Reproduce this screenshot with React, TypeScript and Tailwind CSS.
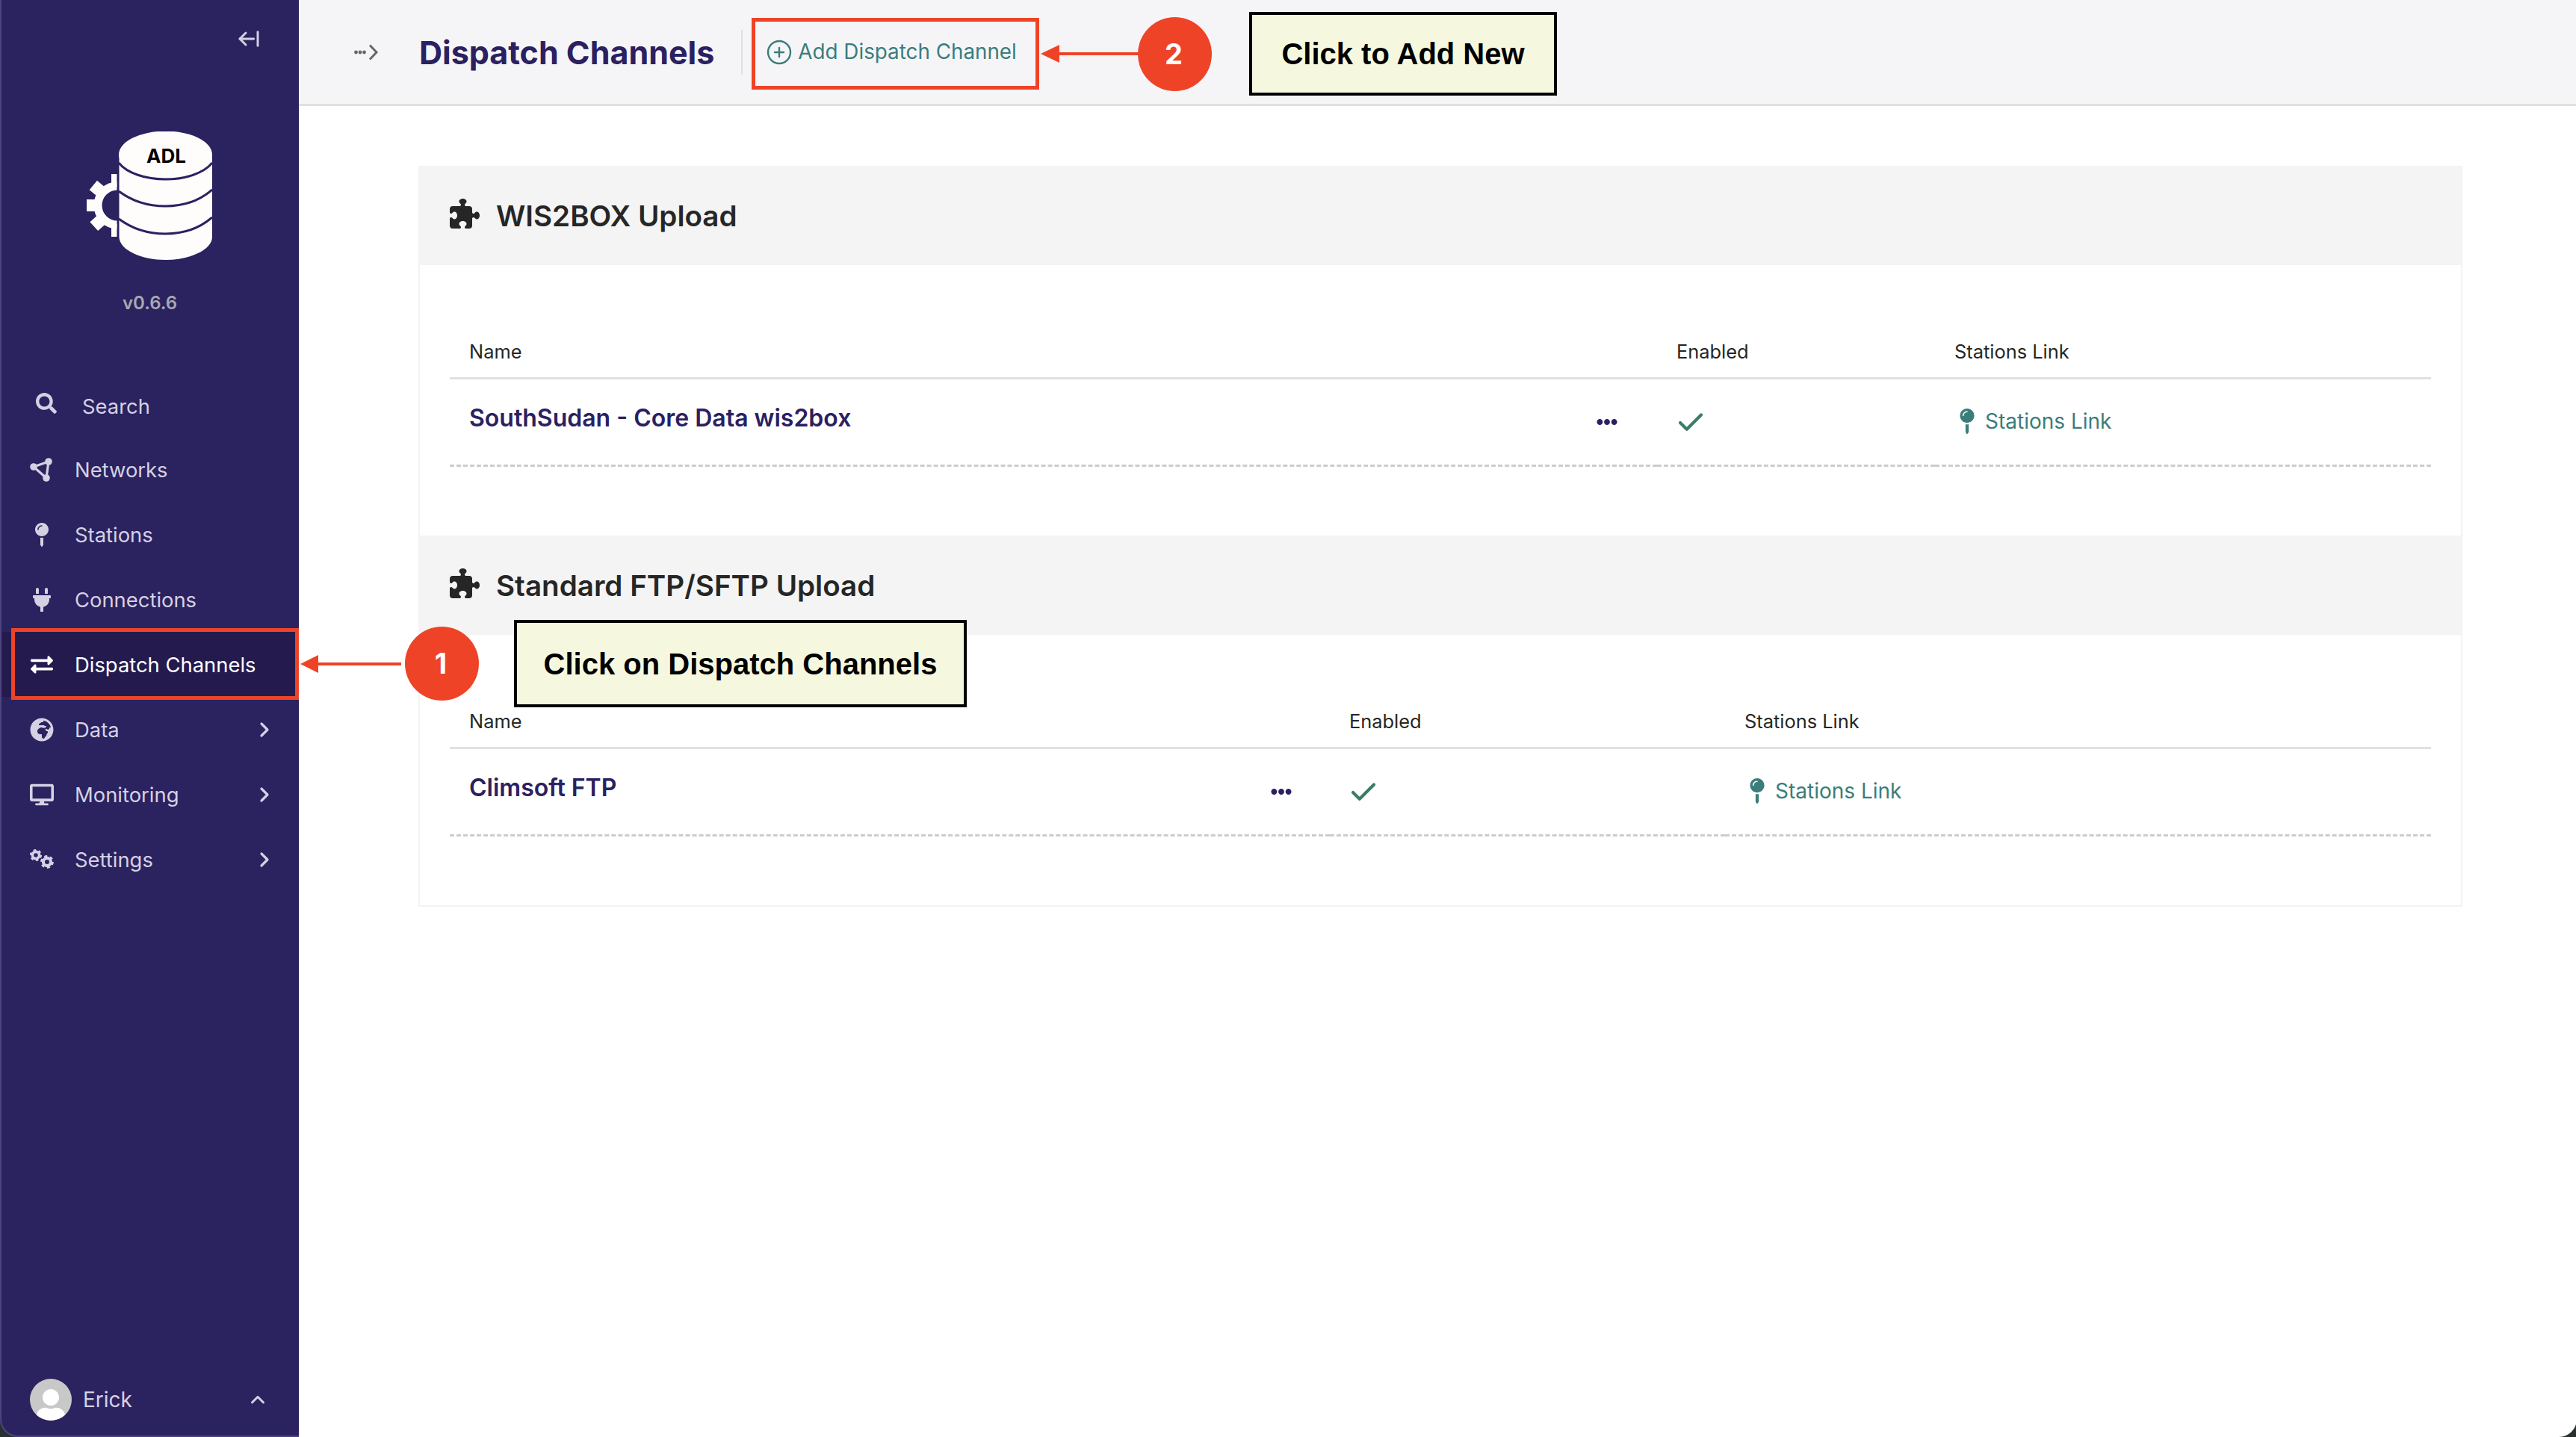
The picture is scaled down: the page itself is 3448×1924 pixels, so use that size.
import React from "react";
import { FaSearch, FaMapPin, FaPlug, FaExchangeAlt, FaGlobeAfrica, FaDesktop, FaEllipsisH, FaUser } from "react-icons/fa";
import { FaPuzzlePiece } from "react-icons/fa6";
import { ArrowLeftFromLine, Check, ChevronRight, ChevronUp, CirclePlus } from "lucide-react";

function NetworkIcon() {
  return (
    <svg viewBox="0 0 32 32" className="w-[32px] h-[32px]" fill="none">
      <path d="M5 12L25 5L22 27Z" stroke="#d5d1e3" strokeWidth="3.2" strokeLinejoin="round" />
      <circle cx="5" cy="12" r="4.8" fill="#d5d1e3" />
      <circle cx="25" cy="5" r="4.8" fill="#d5d1e3" />
      <circle cx="22" cy="27" r="4.8" fill="#d5d1e3" />
    </svg>
  );
}

function SettingsIcon() {
  const gear = (cx: number, cy: number, r: number) => (
    <g key={cx} fill="none" stroke="currentColor">
      <circle cx={cx} cy={cy} r={r * 0.62} strokeWidth={r * 0.5} />
      <circle cx={cx} cy={cy} r={r * 0.92} strokeWidth={r * 0.34} strokeDasharray={`${r * 0.48} ${r * 0.483}`} />
    </g>
  );
  return (
    <svg viewBox="0 0 32 32" className="w-[32px] h-[32px] text-[#d5d1e3]">
      {gear(8, 10, 7.4)}
      {gear(23, 19, 8.2)}
    </svg>
  );
}

function Logo() {
  const teeth = [90, 140, 180, 222, 270];
  return (
    <svg viewBox="116 176 168 172" className="w-[168px] h-[172px] ml-[116px]">
      <defs>
        <clipPath id="gearclip"><rect x="110" y="230" width="46.5" height="90" /></clipPath>
      </defs>
      <g clipPath="url(#gearclip)" fill="#fffcfc">
        <circle cx="157" cy="275" r="26" fill="none" stroke="#fffcfc" strokeWidth="11" />
        {teeth.map((a) => (
          <rect key={a} x="182" y="267" width="17" height="16" transform={`rotate(${-a} 157 275)`} />
        ))}
      </g>
      <path d="M159.5 207 V317 C159.5 335 190 348 221.5 348 C253 348 284 335 284 317 V207 Z" fill="#fffcfc" />
      <ellipse cx="221.5" cy="207" rx="62.5" ry="31.5" fill="#fffcfc" />
      <path d="M159 218 C170 232 195 240 221.5 240 C248 240 273 232 284 218" stroke="#2b2260" strokeWidth="3" fill="none" />
      <path d="M159 256 C175 268 195 276 221.5 276 C248 276 268 268 284 254" stroke="#2b2260" strokeWidth="3" fill="none" />
      <path d="M159 293 C175 305 195 313 221.5 313 C248 313 268 305 284 291" stroke="#2b2260" strokeWidth="3" fill="none" />
    </svg>
  );
}

const nav = [
  { label: "Networks", icon: <NetworkIcon /> },
  { label: "Stations", icon: <FaMapPin size={32} /> },
  { label: "Connections", icon: <FaPlug size={32} /> },
  { label: "Dispatch Channels", icon: <FaExchangeAlt size={30} />, active: true },
  { label: "Data", icon: <FaGlobeAfrica size={32} />, more: true },
  { label: "Monitoring", icon: <FaDesktop size={32} />, more: true },
  { label: "Settings", icon: <SettingsIcon />, more: true },
];

function Sidebar() {
  return (
    <aside className="w-[400px] shrink-0 bg-[#2b2260] border-l-2 border-b-2 border-[#4f4380] rounded-bl-[24px] flex flex-col text-[#d5d1e3]">
      <div className="flex justify-end h-[176px] pt-[36px] pr-[51px]">
        <ArrowLeftFromLine size={32} strokeWidth={2.2} className="text-[#d5d1e3]" />
      </div>
      <div className="relative -ml-[2px]">
        <Logo />
        <span className="absolute left-[196px] top-[18px] text-[26px] font-bold leading-[30px] text-black">ADL</span>
      </div>
      <div className="text-center text-[24px] font-semibold leading-[30px] text-[#a9a8ad] mt-[43px] -ml-[1px]">v0.6.6</div>
      <div className="flex items-center h-[87px] mt-[79px] pl-[46px] gap-[34px]">
        <FaSearch size={28} className="-mt-[8px]" />
        <span className="text-[27.4px] leading-[36px]">Search</span>
      </div>
      <nav className="flex flex-col -mt-[2px]">
        {nav.map((n) => (
          <div key={n.label} className={`flex items-center h-[87px] pl-[26px] pr-[30px] ${n.active ? "bg-[#241a4e] text-white" : ""}`}>
            <span className="w-[60px] flex justify-center shrink-0 -ml-[2px] mr-[14px]">{n.icon}</span>
            <span className="text-[27.4px] leading-[36px] flex-1">{n.label}</span>
            {n.more && <ChevronRight size={32} strokeWidth={2.4} />}
          </div>
        ))}
      </nav>
      <div className="mt-auto flex items-center h-[56px] mb-[20px] pl-[38px] pr-[40px]">
        <div className="w-[56px] h-[56px] rounded-full bg-[#c8c8c8] overflow-hidden flex items-end justify-center">
          <FaUser size={44} className="text-white -mb-[2px]" />
        </div>
        <span className="ml-[15px] text-[28px] flex-1">Erick</span>
        <ChevronUp size={30} strokeWidth={2.4} />
      </div>
    </aside>
  );
}

function Section({ title, name, cols, dotsPr }: { title: string; name: string; cols: [string, string, string]; dotsPr: string }) {
  return (
    <section>
      <div className="h-[133px] bg-[#f4f4f4] flex items-center pl-[40px] gap-[22px] text-[#262626]">
        <FaPuzzlePiece size={40} className="-mt-[6px]" />
        <h2 className="text-[38.6px] font-semibold leading-[50px]">{title}</h2>
      </div>
      <div className="px-[40px] pb-[92px]">
        <table className="w-full table-fixed">
          <colgroup>
            <col className={cols[0]} />
            <col className={cols[1]} />
            <col className={cols[2]} />
          </colgroup>
          <thead>
            <tr className="border-b-[3px] border-[#e0e0e0] text-left text-[25.4px] text-[#262626]">
              <th className="font-normal pl-[26px] pt-[101px] pb-[19px] leading-[30px]">Name</th>
              <th className="font-normal pl-[26px] pt-[101px] pb-[19px] leading-[30px]">Enabled</th>
              <th className="font-normal pl-[26px] pt-[101px] pb-[19px] leading-[30px]">Stations Link</th>
            </tr>
          </thead>
          <tbody>
            <tr className="h-[117px] border-b-[3px] border-dashed border-[#cccccc]">
              <td className={`pl-[26px] ${dotsPr}`}>
                <div className="flex items-center justify-between">
                  <span className="text-[32px] font-semibold text-[#2b2060] leading-[40px] -mt-[10px]">{name}</span>
                  <FaEllipsisH size={28} className="text-[#2b2060]" />
                </div>
              </td>
              <td className="pl-[26px]">
                <Check size={42} strokeWidth={2.4} className="text-[#3a7d66] -ml-[2px] mt-[2px]" />
              </td>
              <td className="pl-[26px]">
                <div className="flex items-center text-[#3a7d7b] text-[28px]">
                  <FaMapPin className="ml-[7px] w-[20px] h-[34px] -mt-[2px]" />
                  <span className="ml-[14px] -mt-[2px]">Stations Link</span>
                </div>
              </td>
            </tr>
          </tbody>
        </table>
      </div>
    </section>
  );
}

function Callout({ className, children }: { className: string; children: React.ReactNode }) {
  return (
    <div className={`absolute border-[4px] border-black bg-[#f5f8de] text-black flex items-center justify-center text-[40px] font-bold ${className}`} style={{ fontFamily: '"Liberation Sans", Arial, sans-serif' }}>
      {children}
    </div>
  );
}

function Badge({ className, children }: { className: string; children: React.ReactNode }) {
  return (
    <div className={`absolute w-[99px] h-[99px] rounded-full bg-[#ee4326] text-white flex items-center justify-center text-[38px] font-bold pr-[3px] ${className}`}>
      {children}
    </div>
  );
}

export default function App() {
  return (
    <div className="relative w-[3448px] h-[1924px] overflow-hidden bg-[#2a302d]" style={{ fontFamily: 'Inter, "Liberation Sans", sans-serif' }}>
      <div className="flex w-full h-full">
        <Sidebar />
        <div className="flex-1 bg-white rounded-br-[24px] flex flex-col">
          <header className="h-[142px] shrink-0 bg-[#f5f5f8] border-b-[3px] border-[#e0e0e0] flex items-center">
            <svg viewBox="0 0 34 24" className="w-[34px] h-[24px] ml-[74px]" fill="none">
              <circle cx="2.5" cy="12" r="2.4" fill="#666" />
              <circle cx="8" cy="12" r="2.4" fill="#666" />
              <circle cx="13.5" cy="12" r="2.4" fill="#666" />
              <path d="M21 2.5L30 12L21 21.5" stroke="#666" strokeWidth="3" />
            </svg>
            <h1 className="ml-[53px] text-[43px] font-bold text-[#2b2060] leading-[56px] whitespace-nowrap">Dispatch Channels</h1>
            <div className="ml-[36px] w-[2px] h-[60px] bg-[#e0e0e0]" />
            <div className="ml-[31px] flex items-center text-[#3a7d7b] text-[27.8px]">
              <CirclePlus size={36} strokeWidth={1.6} />
              <span className="ml-[7px] whitespace-nowrap">Add Dispatch Channel</span>
            </div>
          </header>
          <main className="flex-1 pt-[80px] pl-[160px] pr-[153px]">
            <div className="border-x-2 border-b-2 border-[#f3f3f3]">
              <Section title="WIS2BOX Upload" name="SouthSudan - Core Data wis2box" cols={["w-[1616px]", "w-[372px]", "w-[664px]"]} dotsPr="pr-[53px]" />
              <Section title="Standard FTP/SFTP Upload" name="Climsoft FTP" cols={["w-[1178px]", "w-[529px]", "w-[945px]"]} dotsPr="pr-[51px]" />
            </div>
          </main>
        </div>
      </div>

      <div className="absolute left-[15px] top-[841px] w-[385px] h-[96px] border-[5px] border-[#ee4326]" />
      <svg className="absolute left-[400px] top-[870px] w-[140px] h-[38px]" viewBox="0 0 140 38">
        <path d="M2 19L26 7V17H137V21H26V31Z" fill="#ee4326" />
      </svg>
      <Badge className="left-[542px] top-[839px]">1</Badge>
      <Callout className="left-[688px] top-[830px] w-[606px] h-[117px]">Click on Dispatch Channels</Callout>

      <div className="absolute left-[1006px] top-[24px] w-[385px] h-[96px] border-[5px] border-[#ee4326]" />
      <svg className="absolute left-[1392px] top-[58px] w-[134px] h-[28px]" viewBox="0 0 134 28">
        <path d="M1 14L26 2V12H132V16H26V26Z" fill="#ee4326" />
      </svg>
      <Badge className="left-[1523px] top-[23px]">2</Badge>
      <Callout className="left-[1672px] top-[16px] w-[412px] h-[112px]">Click to Add New</Callout>
    </div>
  );
}
